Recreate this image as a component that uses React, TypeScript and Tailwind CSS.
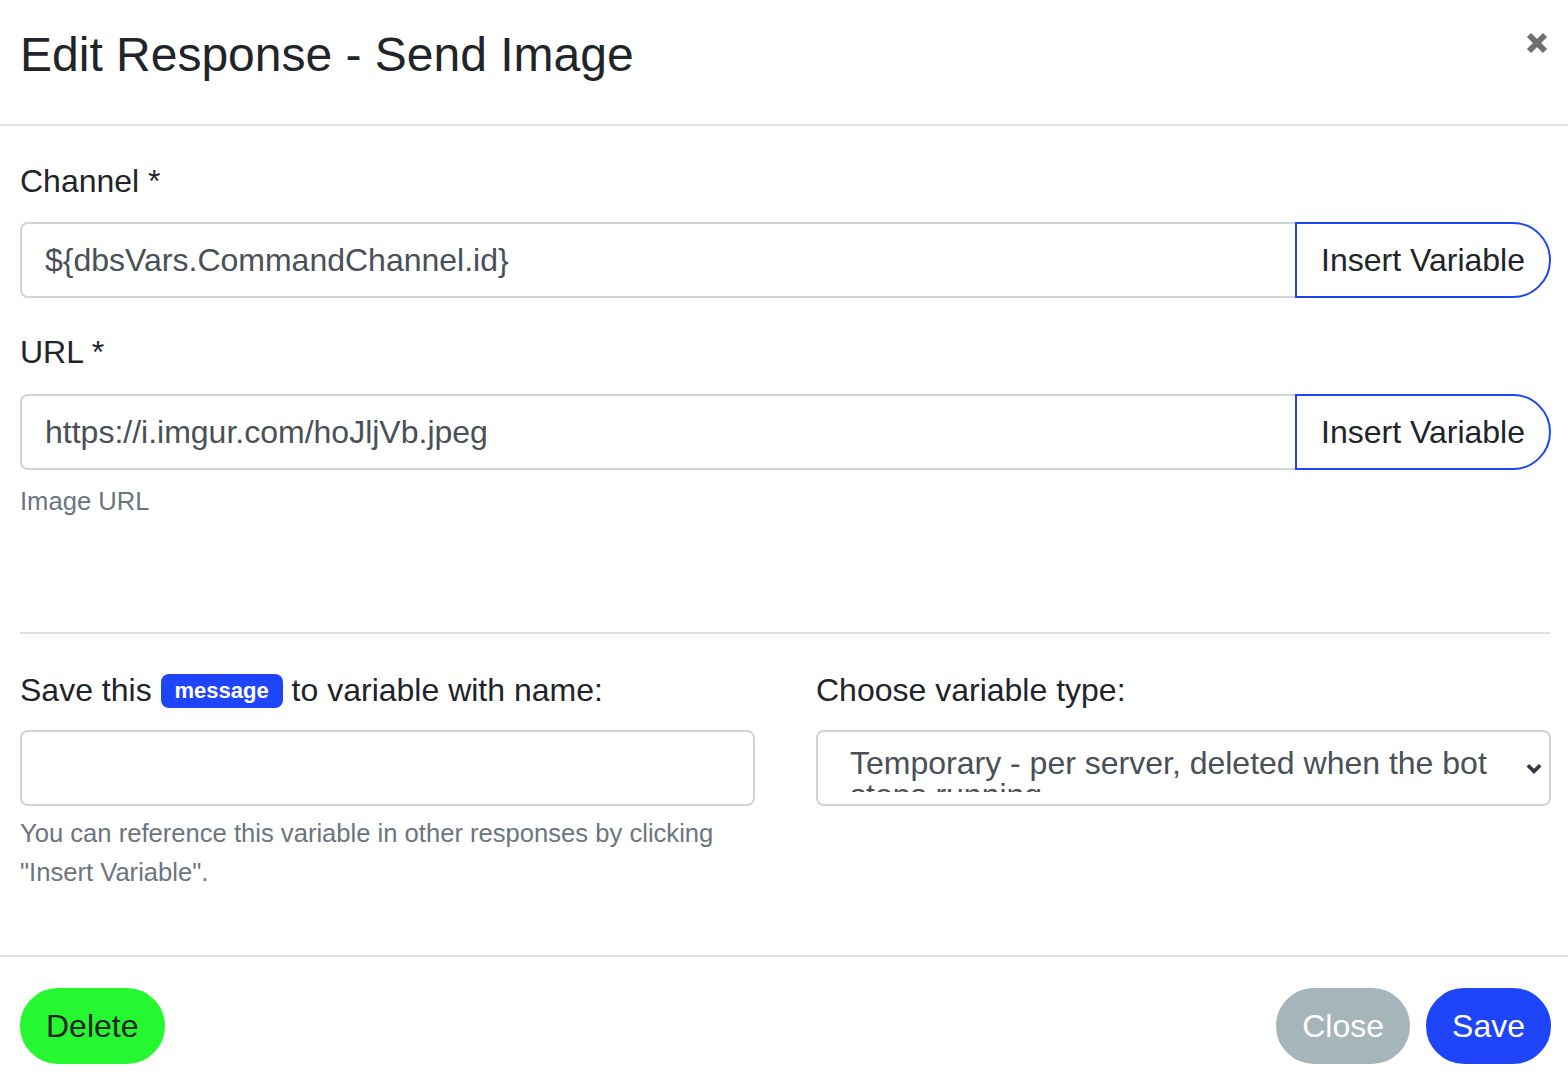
import React from 'react';

const font = "font-['Liberation_Sans',Arial,Helvetica,sans-serif]";

const InputGroup = ({ value }: { value: string }) => (
  <div className="flex h-[76px]">
    <div className="flex-1 flex items-center border-2 border-[#ced4da] rounded-l-[8px] px-[23px] text-[32px] text-[#495057] leading-[1.5]">
      {value}
    </div>
    <button className="-ml-[2px] border-2 border-[#1f45fb] rounded-r-full px-[24px] text-[32px] text-[#212529] leading-[1.5] bg-white">
      Insert Variable
    </button>
  </div>
);

export default function App() {
  return (
    <div className={`${font} bg-white w-full min-h-screen text-[#212529]`}>
      {/* Header */}
      <div className="flex justify-between items-start h-[126px] border-b-2 border-[#dee2e6] pl-[20px] pr-[19px]">
        <h5 className="text-[48px] leading-[1.2] pt-[26px]">Edit Response - Send Image</h5>
        <button className="mt-[31px] w-[24px] h-[24px]" aria-label="Close">
          <svg viewBox="0 0 24 24" className="w-[24px] h-[24px]">
            <path d="M4 4L20 20M20 4L4 20" stroke="#6f6f6f" strokeWidth="6" strokeLinecap="butt" />
          </svg>
        </button>
      </div>

      {/* Body */}
      <div className="pl-[20px] pr-[17px] pt-[31px] pb-[64px]">
        <label className="block text-[32px] leading-[1.5] mb-[17px]">Channel *</label>
        <InputGroup value="${dbsVars.CommandChannel.id}" />

        <label className="block text-[32px] leading-[1.5] mt-[30px] mb-[18px]">URL *</label>
        <InputGroup value="https://i.imgur.com/hoJljVb.jpeg" />
        <div className="mt-[12px] text-[25.6px] leading-[1.5] text-[#6c757d]">Image URL</div>

        <hr className="mt-[112px] border-t-2 border-[#dee2e6]" />

        <div className="grid grid-cols-2 gap-x-[61px] mt-[32px]">
          <div>
            <label className="block text-[32px] leading-[1.5] mb-[16px]">
              Save this{' '}
              <span className="inline-block align-[3px] bg-[#1f45fb] text-white font-bold text-[22px] leading-none px-[14px] py-[6px] rounded-[8px]">
                message
              </span>{' '}
              to variable with name:
            </label>
            <div className="h-[76px] border-2 border-[#ced4da] rounded-[8px]" />
            <div className="mt-[8px] text-[25.6px] leading-[1.5] text-[#6c757d]">
              You can reference this variable in other responses by clicking "Insert Variable".
            </div>
          </div>
          <div>
            <label className="block text-[32px] leading-[1.5] mb-[16px]">Choose variable type:</label>
            <div className="relative h-[76px] border-2 border-[#ced4da] rounded-[8px] pl-[32px] pr-[56px] pt-[15px]">
              <div className="h-[45px] overflow-hidden text-[32px] leading-none text-[#495057]">
                Temporary - per server, deleted when the bot stops running
              </div>
              <svg viewBox="0 0 16 16" className="absolute right-[6px] top-[27px] w-[18px] h-[18px]">
                <path d="M2.5 5.5l5.5 5.5 5.5-5.5" fill="none" stroke="#343a40" strokeWidth="3.2" />
              </svg>
            </div>
          </div>
        </div>
      </div>

      {/* Footer */}
      <div className="flex justify-between border-t-2 border-[#dee2e6] pl-[20px] pr-[17px] pt-[31px] pb-[16px]">
        <button className="rounded-full bg-[#25f730] border-2 border-[#25f730] px-[24px] py-[12px] text-[32px] leading-[1.5] text-[#212529]">
          Delete
        </button>
        <div className="flex gap-[16px]">
          <button className="rounded-full bg-[#a5b5b9] border-2 border-[#a5b5b9] px-[24px] py-[12px] text-[32px] leading-[1.5] text-white">
            Close
          </button>
          <button className="rounded-full bg-[#1f45fb] border-2 border-[#1f45fb] px-[24px] py-[12px] text-[32px] leading-[1.5] text-white">
            Save
          </button>
        </div>
      </div>
    </div>
  );
}
